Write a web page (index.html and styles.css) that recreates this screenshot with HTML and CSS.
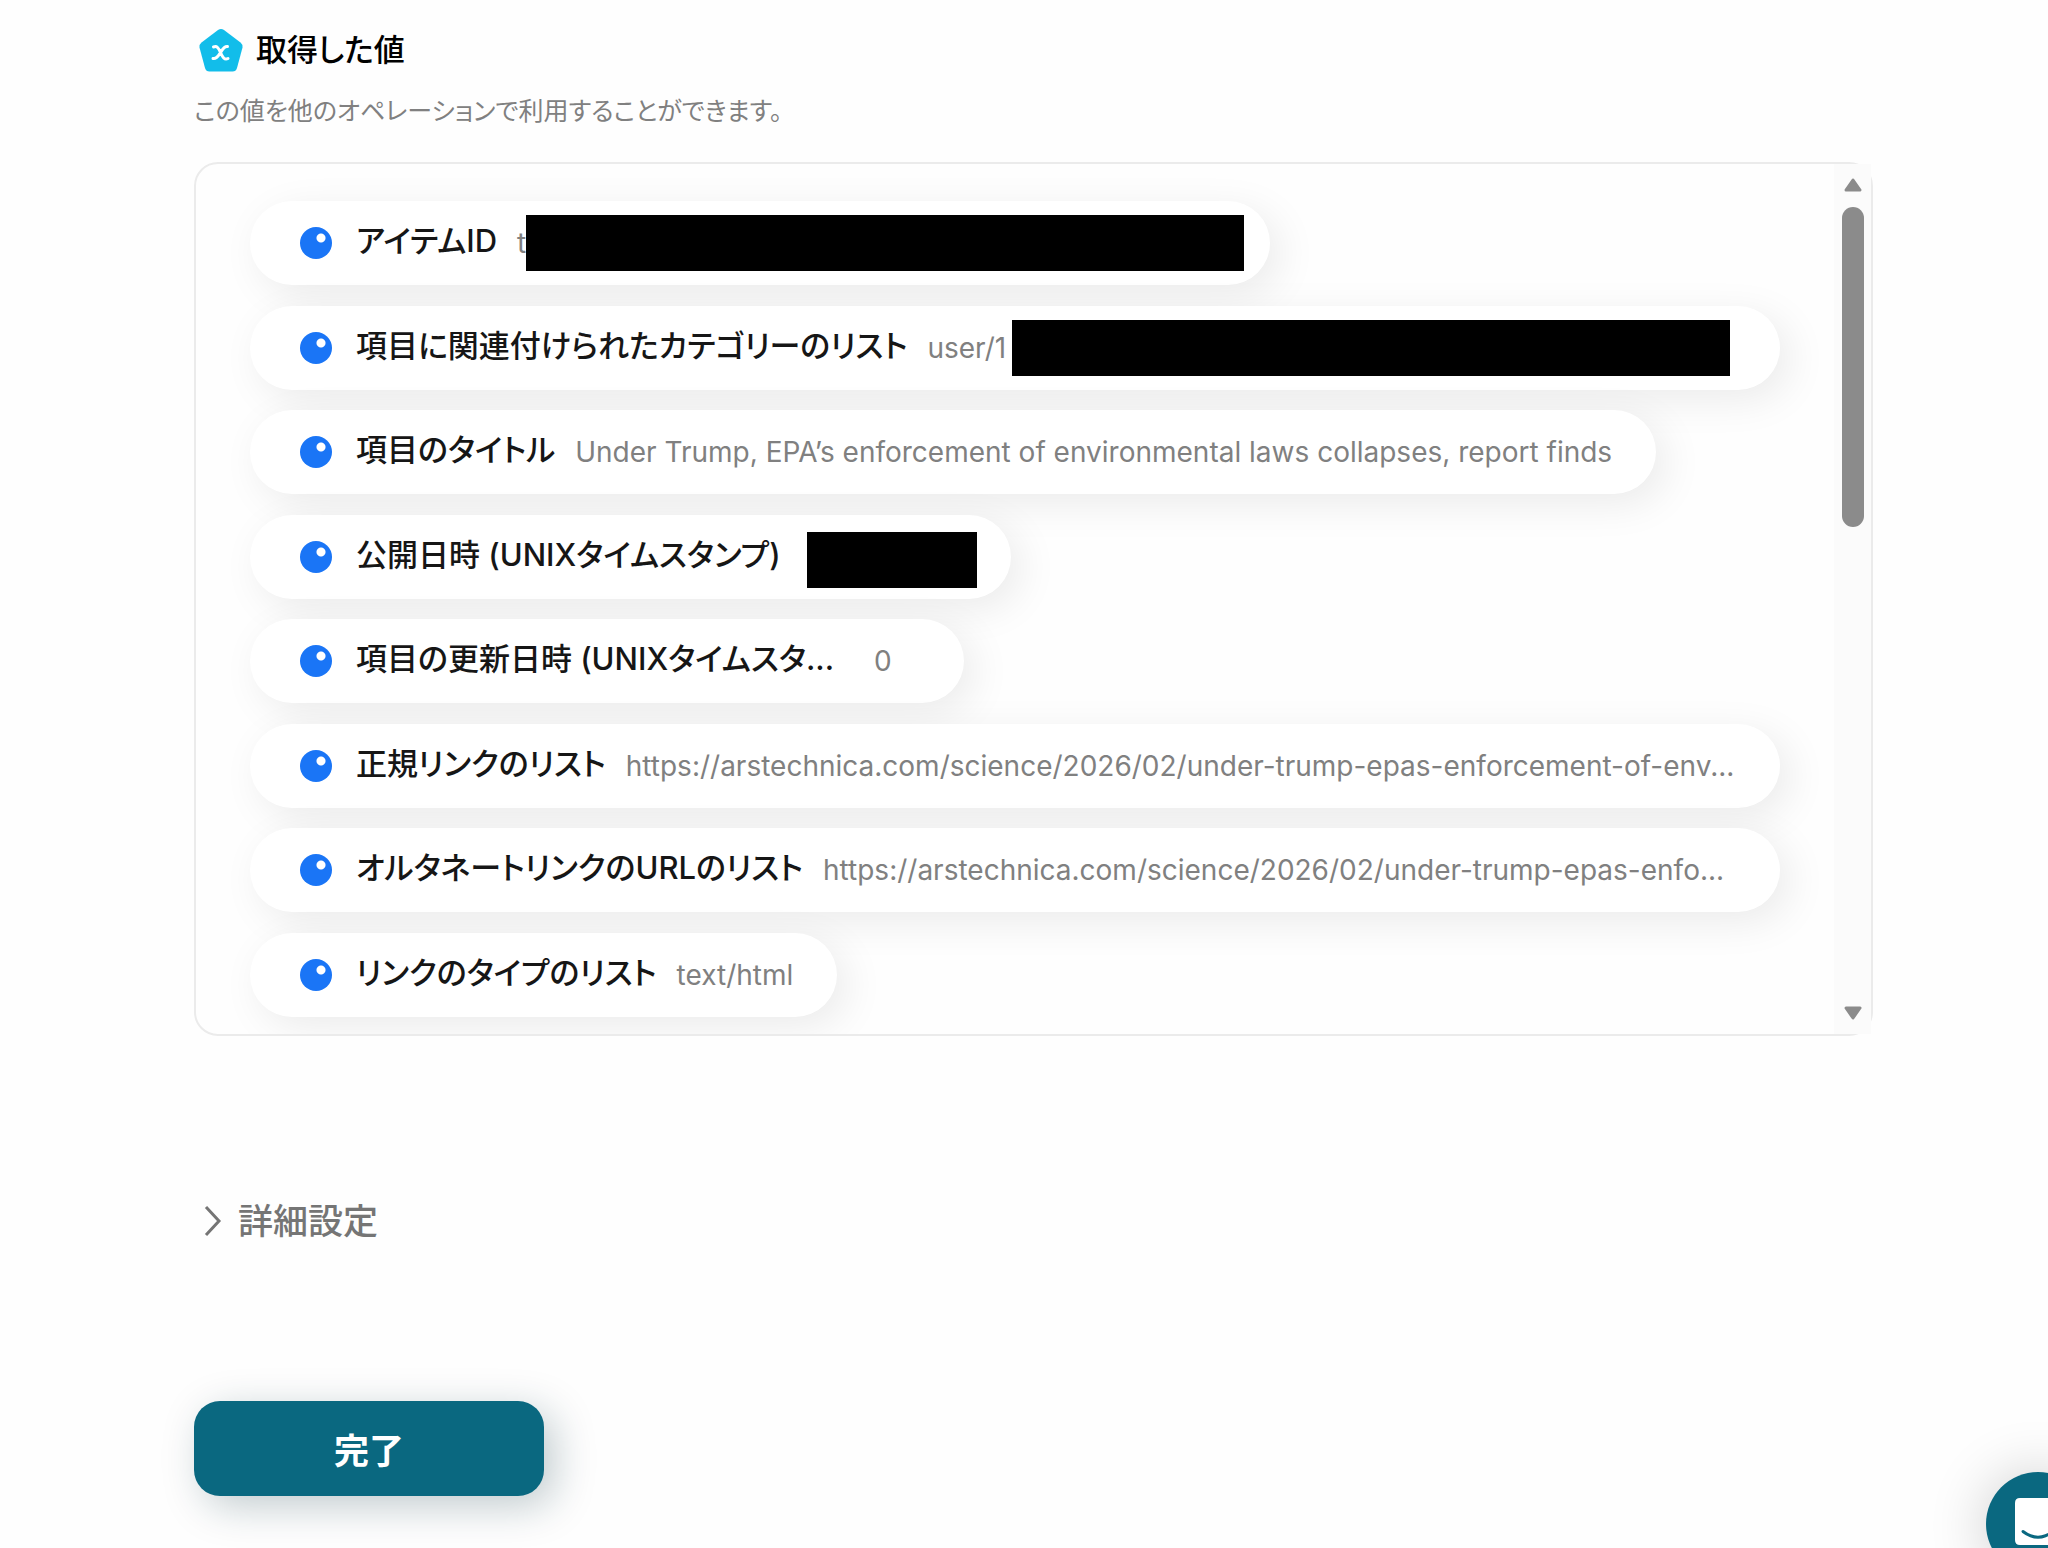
FILE: index.html
```html
<!DOCTYPE html>
<html lang="ja">
<head>
<meta charset="utf-8">
<meta name="viewport" content="width=device-width, initial-scale=1">
<title>取得した値</title>
<link rel="stylesheet" href="styles.css">
</head>
<body>
<main class="page">
  <header class="heading">
    <svg class="heading-icon" viewBox="0 0 44 44" aria-hidden="true">
      <path d="M19 2Q22 0 25 2L41.500 14.500Q44 16.500 43.500 19.500L38 40Q37 43.500 33.500 43.500H10.500Q7 43.500 6 40L.5 19.500Q0 16.500 2.500 14.500Z" fill="#12bdea"/>
      <path d="M14.500 19C18 17.500 19.500 20 21.500 24.500S25.500 32.500 29 30.500M28.500 18.500C25 18 23.500 21.500 21.500 24.500S17.500 31.500 14 30.500" fill="none" stroke="#fff" stroke-width="3" stroke-linecap="round"/>
    </svg>
    <h1 class="title">取得した値</h1>
  </header>
  <p class="lead">この値を他のオペレーションで利用することができます。</p>

  <section class="panel">
    <ul class="values">
      <li class="pill"><span class="dot"></span><span class="label">アイテムID</span><span class="value">t</span><span class="redacted redacted-wide"></span></li>
      <li class="pill pill-full"><span class="dot"></span><span class="label">項目に関連付けられたカテゴリーのリスト</span><span class="value">user/1</span><span class="redacted redacted-wide"></span></li>
      <li class="pill"><span class="dot"></span><span class="label">項目のタイトル</span><span class="value">Under Trump, EPA’s enforcement of environmental laws collapses, report finds</span></li>
      <li class="pill"><span class="dot"></span><span class="label">公開日時 (UNIXタイムスタンプ)</span><span class="redacted redacted-short"></span></li>
      <li class="pill"><span class="dot"></span><span class="label label-cut">項目の更新日時 (UNIXタイムスタ...</span><span class="value value-min">0</span></li>
      <li class="pill pill-full"><span class="dot"></span><span class="label">正規リンクのリスト</span><span class="value">https://arstechnica.com/science/2026/02/under-trump-epas-enforcement-of-env...</span></li>
      <li class="pill pill-full"><span class="dot"></span><span class="label">オルタネートリンクのURLのリスト</span><span class="value">https://arstechnica.com/science/2026/02/under-trump-epas-enfo...</span></li>
      <li class="pill"><span class="dot"></span><span class="label">リンクのタイプのリスト</span><span class="value">text/html</span></li>
    </ul>
    <div class="track" aria-hidden="true">
      <svg class="arrow" viewBox="0 0 18 14"><path d="M9 2L16 12H2Z"/></svg>
      <div class="thumb"></div>
      <svg class="arrow arrow-down" viewBox="0 0 18 14"><path d="M9 12L16 2H2Z"/></svg>
    </div>
  </section>

  <button class="more" type="button">
    <svg class="chevron" viewBox="0 0 18 32" aria-hidden="true"><path d="M2 2L15 16L2 30"/></svg>
    詳細設定
  </button>
  <button class="done" type="button">完了</button>
</main>

<button class="chat" type="button" aria-label="チャットを開く">
  <svg class="chat-icon" viewBox="0 0 46 52" aria-hidden="true">
    <path d="M5 0H41Q46 0 46 5V52L35 47H5Q0 47 0 42V5Q0 0 5 0Z" fill="#fff"/>
    <path d="M8 33.500Q23 45 38 33.500" fill="none" stroke="#0a6880" stroke-width="3" stroke-linecap="round"/>
  </svg>
</button>
</body>
</html>
```
FILE: styles.css
```css
* {
  box-sizing: border-box;
}

body {
  margin: 0;
  background: #fefefe;
  color: #161616;
  font-family: Inter, "Noto Sans CJK JP", sans-serif;
  font-feature-settings: "palt";
}

button {
  border: 0;
  padding: 0;
  font: inherit;
  font-feature-settings: inherit;
  cursor: pointer;
}

.page {
  display: flex;
  flex-direction: column;
  align-items: flex-start;
  padding: 28px 175px 52px 194px;
}

.heading {
  display: flex;
  align-items: center;
  gap: 13px;
  padding-left: 5px;
}

.heading-icon {
  width: 44px;
  height: 44px;
}

.title {
  margin: 0;
  color: #000;
  font-size: 31px;
  font-weight: 500;
  line-height: 44px;
}

.lead {
  margin: 21px 0 33px;
  color: #808080;
  font-size: 25px;
  line-height: 36px;
}

.panel {
  display: flex;
  align-self: stretch;
  border: 2px solid #ebebeb;
  border-radius: 24px;
}

.values {
  display: flex;
  flex: 1;
  flex-direction: column;
  align-items: flex-start;
  justify-content: space-between;
  min-width: 0;
  min-height: 870px;
  margin: 0;
  padding: 37px 54px 17px;
  border-radius: 22px 0 0 22px;
  overflow: hidden;
  list-style: none;
}

.pill {
  display: flex;
  align-items: center;
  max-width: 100%;
  height: 84px;
  padding: 0 44px 0 50px;
  border-radius: 42px;
  background: #fff;
  box-shadow: 10px 10px 40px rgba(0, 0, 0, 0.08);
  white-space: nowrap;
}

.pill-full {
  width: 100%;
}

.dot {
  flex: none;
  width: 32px;
  height: 32px;
  margin-right: 24px;
  border-radius: 50%;
  background: radial-gradient(circle at 21px 11px, #fff 4px, #1a75f6 5px);
}

.label {
  flex: none;
  margin-right: 20px;
  padding-bottom: 4px;
  font-size: 31px;
  font-weight: 500;
  line-height: 44px;
}

.label-cut {
  width: 498px;
}

.value {
  color: #808080;
  font-size: 28px;
  line-height: 36px;
}

.value-min {
  min-width: 46px;
}

.redacted {
  flex: none;
  height: 56px;
  background: #000;
}

.redacted-wide {
  width: 718px;
  margin-right: -18px;
}

.pill-full .redacted-wide {
  margin-right: 6px;
  margin-left: auto;
}

.redacted-short {
  width: 170px;
  margin: 6px -10px 0 6px;
}

.track {
  display: flex;
  flex: none;
  flex-direction: column;
  align-items: center;
  width: 37px;
  padding: 14px 0;
  background: #fbfbfb;
}

.arrow {
  width: 18px;
  height: 14px;
  fill: #8b8b8b;
  stroke: #8b8b8b;
  stroke-width: 3px;
  stroke-linejoin: round;
}

.arrow-down {
  margin-top: auto;
}

.thumb {
  width: 22px;
  height: 320px;
  margin-top: 15px;
  border-radius: 11px;
  background: #8b8b8b;
}

.more {
  display: flex;
  align-items: center;
  gap: 16px;
  margin: 160px 0 0 10px;
  background: none;
  color: #757575;
  font-size: 35px;
  font-weight: 500;
  line-height: 50px;
}

.chevron {
  width: 18px;
  height: 32px;
  fill: none;
  stroke: #757575;
  stroke-width: 3px;
}

.done {
  width: 350px;
  height: 95px;
  margin-top: 155px;
  border-radius: 26px;
  background: #0a6880;
  box-shadow: 10px 10px 40px rgba(10, 50, 64, 0.25);
  color: #fff;
  font-size: 35px;
  font-weight: 700;
}

.chat {
  position: fixed;
  right: -42px;
  bottom: -28px;
  display: flex;
  align-items: center;
  justify-content: center;
  width: 104px;
  height: 104px;
  border-radius: 50%;
  background: #0a6880;
  box-shadow: 0 2px 60px rgba(0, 0, 0, 0.2);
}

.chat-icon {
  width: 46px;
  height: 52px;
}
```
